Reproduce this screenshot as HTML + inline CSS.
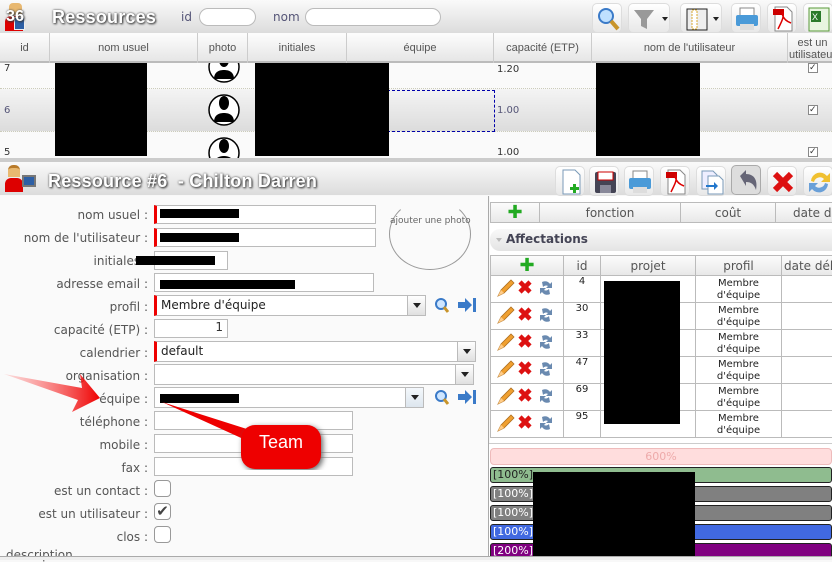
<!DOCTYPE html>
<html><head><meta charset="utf-8"><style>
*{box-sizing:border-box;margin:0;padding:0}
body{width:832px;height:560px;overflow:hidden;background:#f8f8f8;font-family:"DejaVu Sans","Liberation Sans",sans-serif;font-size:12px;color:#333;position:relative}
.a{position:absolute}
.bar{background:linear-gradient(#fafafa,#dcdcdc)}
.ttl{font-family:"Liberation Sans",sans-serif;font-weight:bold;font-size:18px;color:#fff;text-shadow:1px 1px 2px #333,0 0 2px #555;letter-spacing:0.2px;white-space:nowrap}
.ib{position:absolute;width:30px;height:30px;border-radius:5px;background:linear-gradient(#fff,#e8e8e8);border:1px solid #ddd}
.th{position:absolute;top:33px;height:30px;border-right:1px solid #ccc;text-align:center;font-size:11px;color:#555;padding-top:9px;font-family:"Liberation Sans",sans-serif}
.td{position:absolute;font-size:10px;color:#333;font-family:"DejaVu Sans",sans-serif}
.blk{position:absolute;background:#000}
.lbl{position:absolute;right:684px;font-size:12px;color:#555;text-align:right;white-space:nowrap}
.inp{position:absolute;height:19px;background:#fff;border:1px solid #bbb}
.sel{position:absolute;height:21px;background:#fff;border:1px solid #bbb;font-size:12px;padding:2px 4px;color:#222}
.req{border-left:3px solid #e00}
.dd{position:absolute;right:0;top:0;width:18px;height:19px;border-left:1px solid #bbb;background:linear-gradient(#fff,#e0e0e0)}
.dd:after{content:"";position:absolute;left:5px;top:7px;border:4px solid transparent;border-top:5px solid #222}
.cb{position:absolute;left:154px;width:17px;height:17px;border:1px solid #999;border-radius:4px;background:#fff}
.rh{position:absolute;height:21px;border-right:1px solid #bbb;text-align:center;font-size:12px;color:#555;padding-top:3px;background:linear-gradient(#fcfcfc,#e8e8e8);white-space:nowrap;overflow:hidden}
.cell{position:absolute;border-right:1px solid #bbb;border-bottom:1px solid #bbb;background:#fff;font-size:10px;text-align:center;color:#222}
.bars{position:absolute;left:490px;width:342px;height:16px;border:1px solid #222;border-radius:3px;font-size:11px;color:#fff;padding-left:2px;line-height:14px}
</style></head><body>
<div class="a bar" style="left:0;top:0;width:832px;height:34px;border-bottom:1px solid #ccc"></div>
<div class="a" style="left:9px;top:3px;width:13px;height:12px;background:#e8b870;border-radius:4px 4px 0 0"></div>
<div class="a" style="left:5px;top:16px;width:18px;height:15px;background:#d00;border-radius:6px 6px 0 0"></div>
<div class="a" style="left:14px;top:17px;width:11px;height:13px;background:#2d5fa5;border:1px solid #eee"></div>
<div class="a ttl" style="left:6px;top:8px;font-size:16px">36</div>
<div class="a ttl" style="left:52px;top:7px">Ressources</div>
<div class="a" style="left:181px;top:10px;color:#557;font-size:12px">id</div>
<div class="a" style="left:199px;top:8px;width:57px;height:18px;border:1px solid #bbb;border-radius:9px;background:#fff"></div>
<div class="a" style="left:273px;top:10px;color:#557;font-size:12px">nom</div>
<div class="a" style="left:305px;top:8px;width:136px;height:18px;border:1px solid #bbb;border-radius:9px;background:#fff"></div>
<div class="ib" style="left:592px;top:3px"><svg width="30" height="30"><circle cx="13" cy="12" r="7" fill="#bfe0ff" stroke="#3a7ac8" stroke-width="2"/><line x1="18" y1="17" x2="25" y2="25" stroke="#c8942a" stroke-width="4"/></svg></div>
<div class="ib" style="left:628px;top:3px;width:42px"><svg width="42" height="30"><path d="M5 6h20l-7 9v10l-6-3v-7z" fill="#999"/><path d="M33 13h6l-3 4z" fill="#222"/></svg></div>
<div class="ib" style="left:680px;top:3px;width:42px"><svg width="42" height="30"><rect x="6" y="5" width="20" height="21" fill="#eee" stroke="#222"/><rect x="11" y="6" width="5" height="19" fill="#fff" stroke="#d8a830" stroke-dasharray="2 1"/><path d="M32 13h6l-3 4z" fill="#222"/></svg></div>
<div class="ib" style="left:731px;top:3px"><svg width="30" height="30"><rect x="8" y="4" width="14" height="8" fill="#fff" stroke="#888"/><rect x="4" y="11" width="22" height="11" rx="2" fill="#4a9ad8"/><rect x="8" y="20" width="14" height="6" fill="#ddd"/></svg></div>
<div class="ib" style="left:767px;top:3px"><svg width="30" height="30"><path d="M7 3h12l5 5v19H7z" fill="#fff" stroke="#888"/><rect x="5" y="5" width="11" height="6" fill="#c00"/><path d="M10 25c4-8 6-12 5-16s-3 6 8 10" fill="none" stroke="#d00" stroke-width="1.5"/></svg></div>
<div class="ib" style="left:803px;top:3px"><svg width="30" height="30"><rect x="5" y="4" width="20" height="23" fill="#e8f5e0" stroke="#5a9a3a"/><rect x="7" y="7" width="10" height="11" fill="#2a7a2a"/><text x="8" y="16" font-size="9" fill="#fff" font-family="Liberation Sans">X</text></svg></div>
<div class="a" style="left:0;top:33px;width:832px;height:30px;background:linear-gradient(#fdfdfd,#e6e6e6);border-bottom:2px solid #bbb"></div>
<div class="th" style="left:0;width:50px">id</div>
<div class="th" style="left:50px;width:148px">nom usuel</div>
<div class="th" style="left:198px;width:50px">photo</div>
<div class="th" style="left:248px;width:99px">initiales</div>
<div class="th" style="left:347px;width:147px">équipe</div>
<div class="th" style="left:494px;width:98px">capacité (ETP)</div>
<div class="th" style="left:592px;width:196px">nom de l'utilisateur</div>
<div class="th" style="left:788px;width:50px;padding-top:4px;line-height:12px">est un<br>utilisateur</div>
<div class="a" style="left:0;top:63px;width:832px;height:26px;background:#fafafa;border-bottom:1px dotted #ccb"></div>
<div class="a" style="left:0;top:89px;width:832px;height:43px;background:linear-gradient(#f4f4f4,#dcdcdc);border-bottom:1px dotted #ccb"></div>
<div class="a" style="left:0;top:132px;width:832px;height:26px;background:#fafafa"></div>
<div class="td" style="left:4px;top:63px">7</div><div class="td" style="left:497px;top:64px">1.20</div>
<div class="td" style="left:4px;top:105px;color:#557">6</div><div class="td" style="left:497px;top:105px;color:#557">1.00</div>
<div class="td" style="left:4px;top:147px">5</div><div class="td" style="left:497px;top:147px">1.00</div>
<div class="a" style="left:347px;top:90px;width:148px;height:42px;border:1px dashed #00a"></div>
<svg class="a" style="left:206px;top:55px" width="36" height="110"><defs><clipPath id="c"><rect x="0" y="8" width="36" height="95"/></clipPath></defs><g clip-path="url(#c)" fill="#000"><circle cx="18" cy="12" r="15" fill="#fff" stroke="#000" stroke-width="1.5"/><circle cx="18" cy="55" r="15" fill="#fff" stroke="#000" stroke-width="1.5"/><circle cx="18" cy="98" r="15" fill="#fff" stroke="#000" stroke-width="1.5"/><ellipse cx="18" cy="48" rx="5" ry="7"/><path d="M8 67c0-7 5-9 10-9s10 2 10 9z"/><ellipse cx="18" cy="5" rx="5" ry="7"/><path d="M8 24c0-7 5-9 10-9s10 2 10 9z"/><ellipse cx="18" cy="91" rx="5" ry="7"/><path d="M8 110c0-7 5-9 10-9s10 2 10 9z"/></g></svg>
<div class="a" style="left:808px;top:63px;width:10px;height:10px;border:1px solid #888;background:#fff;font-size:9px;line-height:8px">✓</div>
<div class="a" style="left:808px;top:105px;width:10px;height:10px;border:1px solid #888;background:#fff;font-size:9px;line-height:8px">✓</div>
<div class="a" style="left:808px;top:147px;width:10px;height:10px;border:1px solid #888;background:#fff;font-size:9px;line-height:8px">✓</div>
<div class="blk" style="left:55px;top:63px;width:92px;height:93px"></div>
<div class="blk" style="left:255px;top:63px;width:134px;height:93px"></div>
<div class="blk" style="left:596px;top:63px;width:104px;height:93px"></div>
<div class="a" style="left:0;top:158px;width:832px;height:4px;background:#ccc"></div>
<div class="a bar" style="left:0;top:162px;width:832px;height:33px"></div>
<div class="a" style="left:8px;top:165px;width:12px;height:12px;background:#e8b870;border-radius:5px 5px 0 0;border-top:3px solid #b87a2a"></div>
<div class="a" style="left:5px;top:178px;width:18px;height:14px;background:#d00;border-radius:6px 6px 0 0"></div>
<div class="a" style="left:22px;top:175px;width:14px;height:12px;background:#2d5fa5;border:2px solid #777"></div>
<div class="a ttl" style="left:48px;top:171px">Ressource #6&nbsp; - Chilton Darren</div>
<div class="ib" style="left:555px;top:166px"><svg width="30" height="30"><path d="M7 3h12l5 5v19H7z" fill="#fff" stroke="#7a9ab8"/><rect x="17" y="17" width="3" height="9" fill="#2a2"/><rect x="14" y="20" width="9" height="3" fill="#2a2"/></svg></div>
<div class="ib" style="left:589px;top:166px"><svg width="30" height="30"><rect x="5" y="5" width="21" height="21" rx="2" fill="#445"/><rect x="8" y="5" width="15" height="8" fill="#fff" stroke="#c00"/><rect x="10" y="18" width="11" height="8" fill="#889"/></svg></div>
<div class="ib" style="left:624px;top:166px"><svg width="30" height="30"><rect x="8" y="4" width="14" height="8" fill="#fff" stroke="#888"/><rect x="4" y="11" width="22" height="11" rx="2" fill="#4a9ad8"/><rect x="8" y="20" width="14" height="6" fill="#ddd"/></svg></div>
<div class="ib" style="left:660px;top:166px"><svg width="30" height="30"><path d="M7 3h12l5 5v19H7z" fill="#fff" stroke="#888"/><rect x="5" y="5" width="11" height="6" fill="#c00"/><path d="M10 25c4-8 6-12 5-16s-3 6 8 10" fill="none" stroke="#d00" stroke-width="1.5"/></svg></div>
<div class="ib" style="left:696px;top:166px"><svg width="30" height="30"><path d="M5 4h11l4 4v14H5z" fill="#eef" stroke="#7a9ab8"/><path d="M11 9h11l4 4v14H11z" fill="#fff" stroke="#7a9ab8"/><path d="M9 18h8v-3l4 4-4 4v-3H9z" fill="#27c"/></svg></div>
<div class="ib" style="left:731px;top:165px;background:#ddd;border-color:#aaa"><svg width="30" height="30"><path d="M8 10l6-6v4c8 0 12 6 10 16-2-6-5-8-10-8v4z" fill="#667"/></svg></div>
<div class="ib" style="left:767px;top:166px"><svg width="30" height="30"><path d="M7 7l16 16M23 7L7 23" stroke="#d11" stroke-width="6"/></svg></div>
<div class="ib" style="left:803px;top:166px"><svg width="30" height="30"><path d="M7 14a9 9 0 0 1 16-5l3-3v9h-9l3-3a6 6 0 0 0-10 3z" fill="#f0c030"/><path d="M24 17a9 9 0 0 1-16 5l-3 3v-9h9l-3 3a6 6 0 0 0 10-3z" fill="#6aa0d8"/></svg></div>
<div class="a" style="left:0;top:196px;width:489px;height:360px;background:#fafafa;border-right:1px solid #aaa"></div>
<div class="lbl" style="top:208px">nom usuel :</div>
<div class="lbl" style="top:231px">nom de l'utilisateur :</div>
<div class="lbl" style="top:254px">initiales :</div>
<div class="lbl" style="top:277px">adresse email :</div>
<div class="lbl" style="top:300px">profil :</div>
<div class="lbl" style="top:323px">capacité (ETP) :</div>
<div class="lbl" style="top:346px">calendrier :</div>
<div class="lbl" style="top:369px">organisation :</div>
<div class="lbl" style="top:392px">équipe :</div>
<div class="lbl" style="top:415px">téléphone :</div>
<div class="lbl" style="top:438px">mobile :</div>
<div class="lbl" style="top:461px">fax :</div>
<div class="lbl" style="top:484px">est un contact :</div>
<div class="lbl" style="top:507px">est un utilisateur :</div>
<div class="lbl" style="top:530px">clos :</div>
<div class="a" style="left:6px;top:548px;font-size:12px;color:#555">description</div>
<div class="inp req" style="left:154px;top:205px;width:222px"></div>
<div class="inp req" style="left:154px;top:228px;width:222px"></div>
<div class="inp" style="left:154px;top:251px;width:74px"></div>
<div class="inp" style="left:154px;top:273px;width:220px"></div>
<div class="sel req" style="left:154px;top:295px;width:272px">Membre d'équipe<div class="dd"></div></div>
<div class="inp" style="left:154px;top:319px;width:74px;text-align:right;padding-right:4px;font-size:12px">1</div>
<div class="sel req" style="left:154px;top:341px;width:322px">default<div class="dd"></div></div>
<div class="sel" style="left:154px;top:364px;width:320px"><div class="dd"></div></div>
<div class="sel" style="left:154px;top:387px;width:270px"><div class="dd" style="background:linear-gradient(#f4f8fc,#dde6ee)"></div></div>
<div class="inp" style="left:154px;top:411px;width:199px"></div>
<div class="inp" style="left:154px;top:434px;width:199px"></div>
<div class="inp" style="left:154px;top:457px;width:199px"></div>
<div class="cb" style="top:480px"></div>
<div class="cb" style="top:503px;font-size:15px;line-height:15px;text-align:center;color:#444">✔</div>
<div class="cb" style="top:526px"></div>
<div class="blk" style="left:160px;top:209px;width:79px;height:9px"></div>
<div class="blk" style="left:160px;top:233px;width:79px;height:9px"></div>
<div class="blk" style="left:136px;top:256px;width:79px;height:9px"></div>
<div class="blk" style="left:160px;top:280px;width:135px;height:9px"></div>
<div class="blk" style="left:160px;top:394px;width:79px;height:9px"></div>
<div class="a" style="left:389px;top:198px;width:82px;height:72px;border:1px solid #999;border-radius:50%;border-top-color:transparent"></div>
<div class="a" style="left:390px;top:216px;font-size:9px;color:#666">ajouter une photo</div>
<svg class="a" style="left:432px;top:296px" width="45" height="20"><circle cx="9" cy="8" r="5" fill="#cfe6ff" stroke="#3a7ac8" stroke-width="2"/><line x1="12" y1="11" x2="16" y2="16" stroke="#c8942a" stroke-width="3"/><path d="M26 6h7v-4l7 7-7 7v-4h-7z" fill="#3a7ac8"/><rect x="41" y="2" width="3" height="14" fill="#3a7ac8"/></svg>
<svg class="a" style="left:432px;top:388px" width="45" height="20"><circle cx="9" cy="8" r="5" fill="#cfe6ff" stroke="#3a7ac8" stroke-width="2"/><line x1="12" y1="11" x2="16" y2="16" stroke="#c8942a" stroke-width="3"/><path d="M26 6h7v-4l7 7-7 7v-4h-7z" fill="#3a7ac8"/><rect x="41" y="2" width="3" height="14" fill="#3a7ac8"/></svg>
<svg class="a" style="left:0;top:360px" width="330" height="110"><defs><linearGradient id="g" x1="0" x2="1"><stop offset="0" stop-color="#f66" stop-opacity="0.2"/><stop offset="1" stop-color="#e00"/></linearGradient></defs><path d="M4 14L82 28 80 14 100 38 72 52 78 40z" fill="url(#g)"/><path d="M162 42L250 82 250 70z" fill="#e00"/><rect x="241" y="65" width="80" height="44" rx="14" fill="#e00" style="filter:drop-shadow(2px 2px 3px #666)"/><text x="281" y="88" font-family="Liberation Sans" font-size="18" fill="#fff" text-anchor="middle">Team</text></svg>
<div class="a" style="left:490px;top:196px;width:342px;height:360px;background:#fff"></div>
<div class="rh" style="left:490px;top:202px;width:50px;border-left:1px solid #bbb;border-top:1px solid #bbb;border-bottom:1px solid #bbb"><span style="color:#2a2;font-weight:bold;font-size:18px;line-height:14px">✚</span></div>
<div class="rh" style="left:540px;top:202px;width:141px;border-top:1px solid #bbb;border-bottom:1px solid #bbb">fonction</div>
<div class="rh" style="left:681px;top:202px;width:95px;border-top:1px solid #bbb;border-bottom:1px solid #bbb">coût</div>
<div class="rh" style="left:776px;top:202px;width:60px;border-top:1px solid #bbb;border-bottom:1px solid #bbb;text-align:left;padding-left:17px">date dé</div>
<div class="a" style="left:490px;top:229px;width:342px;height:22px;border-radius:10px 0 0 10px;background:linear-gradient(#f8f8f8,#e4e4e4);font-weight:bold;color:#445;font-size:12px;padding:3px 0 0 16px">Affectations</div>
<div class="a" style="left:496px;top:238px;border:3px solid transparent;border-top:4px solid #bbb"></div>
<div class="rh" style="left:490px;top:255px;width:74px;border-left:1px solid #bbb;border-top:1px solid #bbb;border-bottom:1px solid #bbb"><span style="color:#2a2;font-weight:bold;font-size:18px;line-height:14px">✚</span></div>
<div class="rh" style="left:564px;top:255px;width:37px;border-top:1px solid #bbb;border-bottom:1px solid #bbb">id</div>
<div class="rh" style="left:601px;top:255px;width:95px;border-top:1px solid #bbb;border-bottom:1px solid #bbb">projet</div>
<div class="rh" style="left:696px;top:255px;width:86px;border-top:1px solid #bbb;border-bottom:1px solid #bbb">profil</div>
<div class="rh" style="left:782px;top:255px;width:54px;border-top:1px solid #bbb;border-bottom:1px solid #bbb;text-align:left;padding-left:2px">date débu</div>
<div class="a" style="left:490px;top:276px">
<div class="cell" style="left:0;top:0;width:74px;height:27px;border-left:1px solid #bbb"></div><div class="cell" style="left:74px;top:0;width:37px;height:27px">4</div><div class="cell" style="left:111px;top:0;width:95px;height:27px"></div><div class="cell" style="left:206px;top:0;width:86px;height:27px;line-height:12px;padding-top:2px">Membre<br>d'équipe</div><div class="cell" style="left:292px;top:0;width:54px;height:27px"></div>
<div class="cell" style="left:0;top:27px;width:74px;height:27px;border-left:1px solid #bbb"></div><div class="cell" style="left:74px;top:27px;width:37px;height:27px">30</div><div class="cell" style="left:111px;top:27px;width:95px;height:27px"></div><div class="cell" style="left:206px;top:27px;width:86px;height:27px;line-height:12px;padding-top:2px">Membre<br>d'équipe</div><div class="cell" style="left:292px;top:27px;width:54px;height:27px"></div>
<div class="cell" style="left:0;top:54px;width:74px;height:27px;border-left:1px solid #bbb"></div><div class="cell" style="left:74px;top:54px;width:37px;height:27px">33</div><div class="cell" style="left:111px;top:54px;width:95px;height:27px"></div><div class="cell" style="left:206px;top:54px;width:86px;height:27px;line-height:12px;padding-top:2px">Membre<br>d'équipe</div><div class="cell" style="left:292px;top:54px;width:54px;height:27px"></div>
<div class="cell" style="left:0;top:81px;width:74px;height:27px;border-left:1px solid #bbb"></div><div class="cell" style="left:74px;top:81px;width:37px;height:27px">47</div><div class="cell" style="left:111px;top:81px;width:95px;height:27px"></div><div class="cell" style="left:206px;top:81px;width:86px;height:27px;line-height:12px;padding-top:2px">Membre<br>d'équipe</div><div class="cell" style="left:292px;top:81px;width:54px;height:27px"></div>
<div class="cell" style="left:0;top:108px;width:74px;height:27px;border-left:1px solid #bbb"></div><div class="cell" style="left:74px;top:108px;width:37px;height:27px">69</div><div class="cell" style="left:111px;top:108px;width:95px;height:27px"></div><div class="cell" style="left:206px;top:108px;width:86px;height:27px;line-height:12px;padding-top:2px">Membre<br>d'équipe</div><div class="cell" style="left:292px;top:108px;width:54px;height:27px"></div>
<div class="cell" style="left:0;top:135px;width:74px;height:27px;border-left:1px solid #bbb"></div><div class="cell" style="left:74px;top:135px;width:37px;height:27px">95</div><div class="cell" style="left:111px;top:135px;width:95px;height:27px"></div><div class="cell" style="left:206px;top:135px;width:86px;height:27px;line-height:12px;padding-top:2px">Membre<br>d'équipe</div><div class="cell" style="left:292px;top:135px;width:54px;height:27px"></div>
</div>
<svg class="a" style="left:495px;top:278px" width="62" height="160">
<g id="ic"><path d="M3 18l3-6 10-10 3 3-10 10z" fill="#f0a030" stroke="#b07020" stroke-width="0.8"/><path d="M3 18l3-6 3 3z" fill="#fc8"/><path d="M25 4l10 10M35 4L25 14" stroke="#d11" stroke-width="4.5"/><path d="M47 4a6 6 0 0 1 8 2l2-2v6h-6l2-2a4 4 0 0 0-5 1zM55 16a6 6 0 0 1-8-2l-2 2v-6h6l-2 2a4 4 0 0 0 5-1z" fill="#6a8ab0"/></g>
<use href="#ic" y="27"/><use href="#ic" y="54"/><use href="#ic" y="81"/><use href="#ic" y="108"/><use href="#ic" y="135"/>
</svg>
<div class="blk" style="left:604px;top:281px;width:76px;height:143px"></div>
<div class="a" style="left:489px;top:443px;width:343px;height:113px;border-top:1px solid #ccc;background:#fff"></div>
<div class="a" style="left:490px;top:448px;width:342px;height:17px;background:#fdd;border:1px solid #ebb;border-radius:4px;text-align:center;color:#eaa;font-size:11px;line-height:15px">600%</div>
<div class="bars" style="top:467px;background:#8fbc8f;color:#222">[100%]</div>
<div class="bars" style="top:486px;background:#808080">[100%]</div>
<div class="bars" style="top:505px;background:#808080">[100%]</div>
<div class="bars" style="top:524px;background:#4169e1">[100%]</div>
<div class="bars" style="top:543px;background:#800080">[200%]</div>
<div class="blk" style="left:533px;top:472px;width:162px;height:84px"></div>
<div class="a" style="left:0;top:556px;width:832px;height:4px;background:#eee;border-top:1px solid #aaa"></div>
</body></html>
